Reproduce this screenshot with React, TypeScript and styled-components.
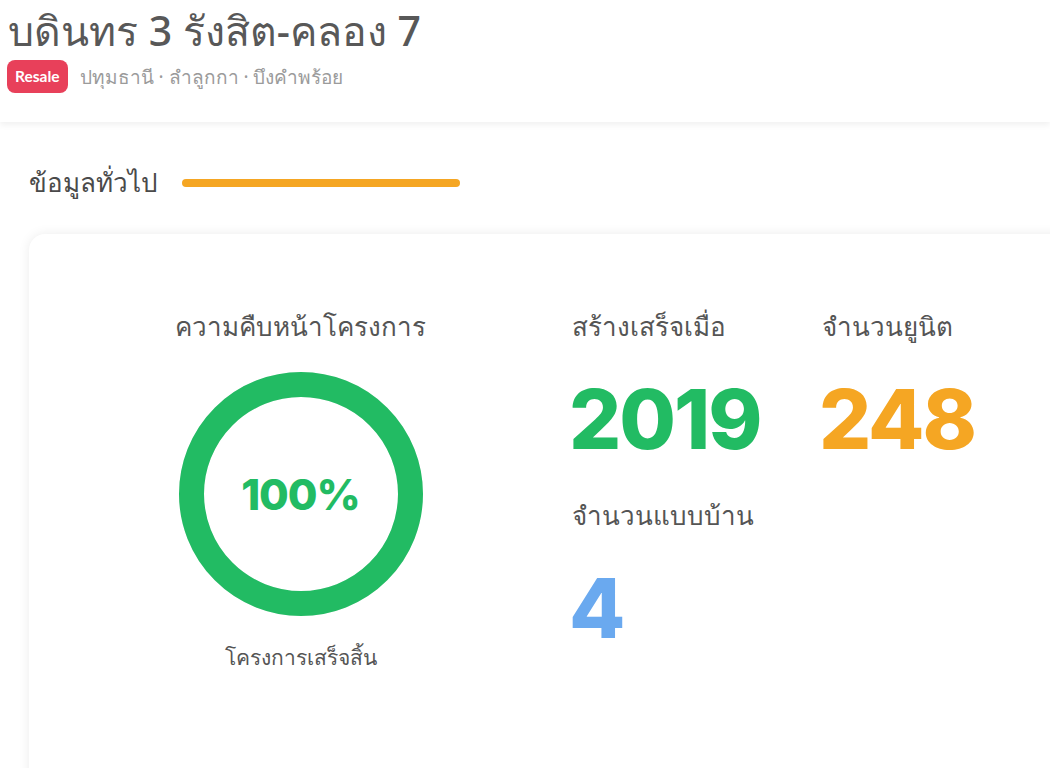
import React from 'react';
import styled, { createGlobalStyle } from 'styled-components';

const GlobalStyle = createGlobalStyle`
  html, body {
    margin: 0;
    padding: 0;
    background: #ffffff;
    overflow: hidden;
  }
  body {
    font-family: 'Noto Sans', 'DejaVu Sans', sans-serif;
    color: #555;
  }
`;

const Header = styled.header`
  padding: 5px 8px 29px;
  background: #fff;
  box-shadow: 0 3px 6px rgba(0, 0, 0, 0.06);
`;

const Title = styled.h1`
  margin: 0;
  font-size: 41px;
  font-weight: 500;
  line-height: 50px;
  color: #585858;
`;

const MetaRow = styled.div`
  display: flex;
  align-items: center;
  gap: 12px;
  margin-top: 5px;
`;

const Badge = styled.span`
  background: #e8405a;
  color: #fff;
  font-family: 'Lato', 'Noto Sans', sans-serif;
  font-weight: 700;
  font-size: 15.5px;
  padding: 7px 8px;
  margin-left: -1px;
  border-radius: 8px;
  line-height: 19px;
`;

const Location = styled.span`
  font-size: 19px;
  color: #9b9b9b;
`;

const Main = styled.main`
  padding: 41px 0 0 29px;
`;

const SectionHead = styled.div`
  display: flex;
  align-items: center;
  gap: 24px;
`;

const SectionTitle = styled.h2`
  margin: 0;
  font-size: 26px;
  font-weight: 500;
  color: #4a4a4a;
  line-height: 38px;
`;

const Underline = styled.span`
  width: 278px;
  height: 8px;
  margin-top: 2px;
  border-radius: 4px;
  background: #f5a623;
`;

const Card = styled.section`
  margin-top: 33px;
  margin-right: -40px;
  min-height: 600px;
  background: #fff;
  border-radius: 16px;
  box-shadow: 0 0 12px rgba(0, 0, 0, 0.08);
  display: grid;
  grid-template-columns: 543px 1fr;
  padding-top: 74px;
`;

const Progress = styled.div`
  display: flex;
  flex-direction: column;
  align-items: center;
`;

const Label = styled.div`
  font-size: 26px;
  line-height: 36px;
  color: #555;
`;

const Ring = styled.div`
  position: relative;
  width: 244px;
  height: 244px;
  margin-top: 28px;
  display: flex;
  align-items: center;
  justify-content: center;
`;

const RingValue = styled.span`
  position: absolute;
  font-family: 'Inter', 'Lato', sans-serif;
  font-weight: 800;
  font-size: 43px;
  letter-spacing: -1px;
  color: #22bb63;
`;

const Caption = styled.div`
  margin-top: 25px;
  font-size: 21px;
  color: #555;
`;

const Stats = styled.div`
  display: grid;
  grid-template-columns: 250px 250px;
  row-gap: 36px;
  align-content: start;
`;

const Stat = styled.div`
  display: flex;
  flex-direction: column;
`;

const Value = styled.div<{ $color: string }>`
  margin-top: 35px;
  font-family: 'Inter', 'Lato', sans-serif;
  font-weight: 800;
  font-size: 82px;
  line-height: 82px;
  letter-spacing: -2px;
  margin-left: -3px;
  color: ${(p) => p.$color};
`;

const stats = [
  { label: 'สร้างเสร็จเมื่อ', value: '2019', color: '#22bb63' },
  { label: 'จำนวนยูนิต', value: '248', color: '#f5a623' },
  { label: 'จำนวนแบบบ้าน', value: '4', color: '#6aa9ef' },
];

function ProgressRing({ percent }: { percent: number }) {
  const r = 109.5;
  const c = 2 * Math.PI * r;
  return (
    <svg width="244" height="244" viewBox="0 0 244 244">
      <circle cx="122" cy="122" r={r} fill="none" stroke="#eee" strokeWidth="25" />
      <circle
        cx="122"
        cy="122"
        r={r}
        fill="none"
        stroke="#22bb63"
        strokeWidth="25"
        strokeDasharray={c}
        strokeDashoffset={c * (1 - percent / 100)}
        transform="rotate(-90 122 122)"
      />
    </svg>
  );
}

export default function App() {
  return (
    <>
      <GlobalStyle />
      <Header>
        <Title>บดินทร 3 รังสิต-คลอง 7</Title>
        <MetaRow>
          <Badge>Resale</Badge>
          <Location>ปทุมธานี · ลำลูกกา · บึงคำพร้อย</Location>
        </MetaRow>
      </Header>
      <Main>
        <SectionHead>
          <SectionTitle>ข้อมูลทั่วไป</SectionTitle>
          <Underline />
        </SectionHead>
        <Card>
          <Progress>
            <Label>ความคืบหน้าโครงการ</Label>
            <Ring>
              <ProgressRing percent={100} />
              <RingValue>100%</RingValue>
            </Ring>
            <Caption>โครงการเสร็จสิ้น</Caption>
          </Progress>
          <Stats>
            {stats.map((s) => (
              <Stat key={s.label}>
                <Label>{s.label}</Label>
                <Value $color={s.color}>{s.value}</Value>
              </Stat>
            ))}
          </Stats>
        </Card>
      </Main>
    </>
  );
}
